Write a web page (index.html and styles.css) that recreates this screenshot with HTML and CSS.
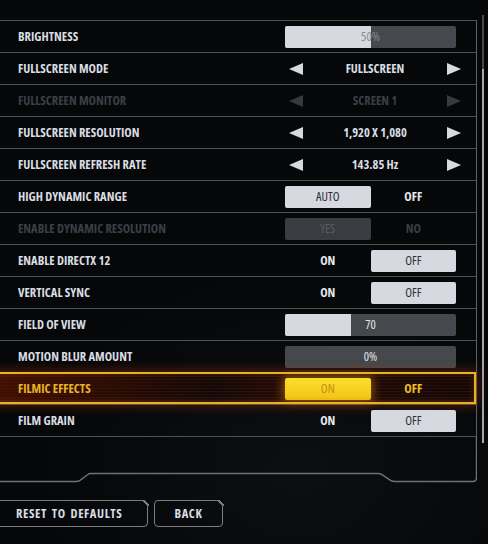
FILE: index.html
```html
<!DOCTYPE html>
<html>
<head>
<meta charset="utf-8">
<link rel="stylesheet" href="styles.css">
</head>
<body>
<div class="screen">
  <div class="main">
    <div class="list">
      <div class="row">
        <span class="label">BRIGHTNESS</span>
        <div class="ctrl"><div class="slider"><div class="fill" style="width:50%"></div><span class="sval mid">50%</span></div></div>
      </div>
      <div class="row">
        <span class="label">FULLSCREEN MODE</span>
        <div class="ctrl"><div class="selector"><span class="arr left"></span><span class="val">FULLSCREEN</span><span class="arr right"></span></div></div>
      </div>
      <div class="row disabled">
        <span class="label">FULLSCREEN MONITOR</span>
        <div class="ctrl"><div class="selector"><span class="arr left"></span><span class="val">SCREEN 1</span><span class="arr right"></span></div></div>
      </div>
      <div class="row">
        <span class="label">FULLSCREEN RESOLUTION</span>
        <div class="ctrl"><div class="selector"><span class="arr left"></span><span class="val">1,920 X 1,080</span><span class="arr right"></span></div></div>
      </div>
      <div class="row">
        <span class="label">FULLSCREEN REFRESH RATE</span>
        <div class="ctrl"><div class="selector"><span class="arr left"></span><span class="val">143.85 Hz</span><span class="arr right"></span></div></div>
      </div>
      <div class="row">
        <span class="label">HIGH DYNAMIC RANGE</span>
        <div class="ctrl"><div class="toggle"><span class="opt on">AUTO</span><span class="opt">OFF</span></div></div>
      </div>
      <div class="row disabled">
        <span class="label">ENABLE DYNAMIC RESOLUTION</span>
        <div class="ctrl"><div class="toggle"><span class="opt on">YES</span><span class="opt">NO</span></div></div>
      </div>
      <div class="row">
        <span class="label">ENABLE DIRECTX 12</span>
        <div class="ctrl"><div class="toggle"><span class="opt">ON</span><span class="opt on">OFF</span></div></div>
      </div>
      <div class="row">
        <span class="label">VERTICAL SYNC</span>
        <div class="ctrl"><div class="toggle"><span class="opt">ON</span><span class="opt on">OFF</span></div></div>
      </div>
      <div class="row">
        <span class="label">FIELD OF VIEW</span>
        <div class="ctrl"><div class="slider"><div class="fill" style="width:38.5%"></div><span class="sval">70</span></div></div>
      </div>
      <div class="row">
        <span class="label">MOTION BLUR AMOUNT</span>
        <div class="ctrl"><div class="slider"><div class="fill" style="width:0%"></div><span class="sval">0%</span></div></div>
      </div>
      <div class="row active">
        <span class="label">FILMIC EFFECTS</span>
        <div class="ctrl"><div class="toggle"><span class="opt on">ON</span><span class="opt">OFF</span></div></div>
      </div>
      <div class="row">
        <span class="label">FILM GRAIN</span>
        <div class="ctrl"><div class="toggle"><span class="opt">ON</span><span class="opt on">OFF</span></div></div>
      </div>
    </div>
    <svg class="frame" width="477" height="48" viewBox="0 0 477 48">
      <path d="M476.5 0 V40.5 Q476.5 44.5 472.5 44.5 H395 Q392.5 44.5 390.5 43.3 L382 37.7 Q380 36.5 378 36.5 H91 Q89 36.5 87.5 37.7 L80 43.3 Q78 44.5 76 44.5 H0" fill="none" stroke="#6e7176" stroke-width="1.4"/>
    </svg>
    <div class="footer">
      <button class="btn reset">RESET TO DEFAULTS</button>
      <button class="btn back">BACK</button>
    </div>
  </div>
  <div class="scroll"><div class="thumb"></div></div>
</div>
</body>
</html>
```
FILE: styles.css
```css
* { box-sizing: border-box; }
html, body { margin: 0; padding: 0; }
body {
  background: #060709;
  width: 488px;
  height: 544px;
  overflow: hidden;
  font-family: "Open Sans", "Liberation Sans", sans-serif;
  font-stretch: 75%;
  font-weight: 700;
  font-size: 12.5px;
  color: #d9dce1;
}
.screen {
  display: flex;
  width: 488px;
  height: 544px;
  overflow: hidden;
  background: radial-gradient(ellipse 260px 200px at 300px 470px, #0d0e11 0%, #060709 100%);
}
.main {
  width: 477px;
  flex: none;
}
.list {
  margin-top: 20px;
  border-top: 1px solid #4f5258;
  border-right: 1px solid #5d6066;
}
.row {
  position: relative;
  display: flex;
  align-items: center;
  height: 32px;
  padding-left: 18px;
  border-bottom: 1px solid #4f5258;
}
.label {
  flex: 1;
  white-space: nowrap;
}
.ctrl {
  width: 171px;
  height: 22px;
  margin-right: 20px;
  display: flex;
}
.slider {
  flex: 1;
  display: grid;
  background: #45484c;
  border-radius: 2px;
  overflow: hidden;
}
.fill, .sval { grid-area: 1 / 1; }
.fill {
  background: #d6dae0;
  height: 100%;
}
.sval {
  align-self: center;
  justify-self: center;
  font-weight: 400;
  color: #e2e5ea;
}
.sval.mid { color: #878a8f; }
.selector {
  flex: 1;
  display: flex;
  align-items: center;
  justify-content: space-between;
  margin: 0 -5px 0 4px;
}
.arr {
  width: 0;
  height: 0;
  border-top: 6px solid transparent;
  border-bottom: 6px solid transparent;
}
.arr.left { border-right: 14px solid #d6dae0; }
.arr.right { border-left: 14px solid #d6dae0; }
.val { color: #d9dce1; }
.toggle {
  flex: 1;
  display: grid;
  grid-template-columns: 1fr 1fr;
}
.opt {
  display: flex;
  align-items: center;
  justify-content: center;
  border-radius: 2px;
  color: #e6e9ee;
}
.opt.on {
  background: #d6dae0;
  color: #2c2f34;
  font-weight: 400;
}
.disabled .label, .disabled .val { color: #3b3f46; }
.disabled .arr.left { border-right-color: #353940; }
.disabled .arr.right { border-left-color: #353940; }
.disabled .opt { color: #3b3f46; }
.disabled .opt.on { background: #393c41; color: #5a5e64; }

.row.active {
  background:
    repeating-linear-gradient(to bottom, rgba(110, 25, 0, 0.28) 0 1px, transparent 1px 3px),
    linear-gradient(to right, rgba(100, 22, 0, 0.6), rgba(40, 8, 0, 0.2) 45%, rgba(70, 14, 0, 0.4) 60%, rgba(40, 8, 0, 0.25));
}
.row.active::before {
  content: "";
  position: absolute;
  top: -1px;
  bottom: 0;
  left: -10px;
  right: 0;
  border: 2px solid #e6b322;
  box-shadow: 0 0 10px 2px rgba(170, 60, 0, 0.45), inset 0 0 6px rgba(200, 90, 0, 0.35);
  pointer-events: none;
}
.active .label { color: #e8b424; }
.active .opt { color: #f0c020; }
.active .opt.on {
  background: linear-gradient(#fbe02a, #f1c314);
  color: #c98c16;
  box-shadow: 0 0 10px 2px rgba(255, 170, 0, 0.45);
}

.frame { display: block; }
.footer {
  display: flex;
  gap: 6px;
  padding-top: 15px;
}
.btn {
  position: relative;
  height: 27px;
  background: transparent;
  border: 1.5px solid #7a7d82;
  border-radius: 4px;
  border-top-right-radius: 0;
  font: inherit;
  font-stretch: 87.5%;
  letter-spacing: 0.6px;
  word-spacing: 2px;
  color: #d9dce1;
  padding: 0;
}
.btn::after {
  content: "";
  position: absolute;
  top: -1.5px;
  right: -1.5px;
  width: 6px;
  height: 6px;
  background: linear-gradient(to top right, transparent calc(50% - 0.8px), #7a7d82 calc(50% - 0.8px), #7a7d82 calc(50% + 0.8px), #060709 calc(50% + 0.8px));
}
.reset {
  width: 157px;
  margin-left: -9px;
  text-align: left;
  padding-left: 24px;
}
.back {
  width: 69px;
  text-align: center;
}
.scroll {
  width: 2px;
  height: 428px;
  margin: 15px 0 0 5px;
  background: #45484d;
  display: flex;
  flex-direction: column;
}
.thumb {
  margin-top: 54px;
  flex: 1;
  background: #a3a6ab;
}
```
